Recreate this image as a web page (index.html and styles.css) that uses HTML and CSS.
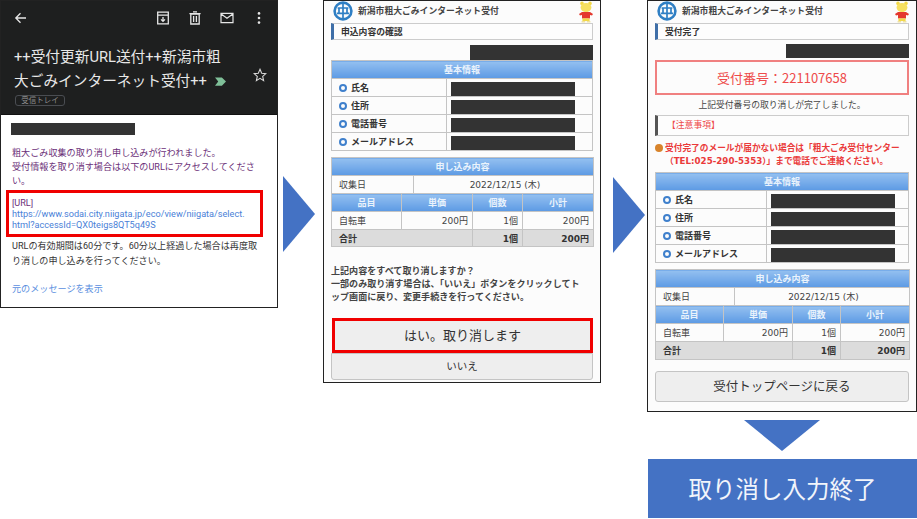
FILE: index.html
```html
<!DOCTYPE html>
<html lang="ja">
<head>
    <meta charset="UTF-8">
    <meta name="viewport" content="width=device-width, initial-scale=1.0">
    <title>取り消し入力の流れ</title>
    <link rel="stylesheet" href="styles.css">
</head>
<body>
    <div class="sheet">
        <!-- Step 1: mail -->
        <div class="phone mail">
            <div class="mail-head">
                <div class="mail-bar">
                    <svg class="icon" viewBox="0 0 14 14"><path d="M12 7H2M6.5 2.2 1.8 7l4.7 4.8" fill="none" stroke="#e6e6e6" stroke-width="1.3"/></svg>
                    <div class="mail-tools">
                        <svg class="icon" viewBox="0 0 14 14"><path d="M1.7 1.2h10.6v11.6H1.7zM1.7 4.2h10.6M7 6v4.4M5 8.4l2 2 2-2" fill="none" stroke="#e6e6e6" stroke-width="1.3"/></svg>
                        <svg class="icon" viewBox="0 0 14 14"><path d="M2.8 3h8.4v10H2.8zM1.4 2.6h11.2M5 .9h4M5.6 5v6M8.4 5v6" fill="none" stroke="#e6e6e6" stroke-width="1.3"/></svg>
                        <svg class="icon icon-mail" viewBox="0 0 14 14"><path d="M1 2.4h12v9.2H1zM1.2 3l5.8 4.2L12.8 3" fill="none" stroke="#e6e6e6" stroke-width="1.2"/></svg>
                        <svg class="icon icon-dots" viewBox="0 0 14 14"><circle cx="7" cy="2.4" r="1.3" fill="#e6e6e6"/><circle cx="7" cy="7" r="1.3" fill="#e6e6e6"/><circle cx="7" cy="11.6" r="1.3" fill="#e6e6e6"/></svg>
                    </div>
                </div>
                <div class="mail-subject">
                    <div class="mail-title">++受付更新URL送付++新潟市粗<br>大ごみインターネット受付++ <svg class="mail-mark" viewBox="0 0 12 9"><path d="M0 0h7.5L12 4.5 7.5 9H0l3.5-4.5z" fill="#7fbf98"/></svg></div>
                    <svg class="mail-star" viewBox="0 0 14 14"><path d="M7 1.3 8.7 5.2l4.2.4-3.2 2.8.9 4.2L7 10.4l-3.6 2.2.9-4.2L1.1 5.6l4.2-.4z" fill="none" stroke="#d8d8d8" stroke-width="1.1"/></svg>
                </div>
                <span class="mail-chip">受信トレイ</span>
            </div>
            <div class="mail-body">
                <div class="redact redact-sender"></div>
                <p class="mail-text purple">粗大ごみ収集の取り消し申し込みが行われました。<br>受付情報を取り消す場合は以下のURLにアクセスしてください。</p>
                <div class="mail-url">
                    <div class="purple">[URL]</div>
                    <div class="mail-link">https://www.sodai.city.niigata.jp/eco/view/niigata/select.<br>html?accessId=QX0teigs8QT5q49S</div>
                </div>
                <p class="mail-text mail-note">URLの有効期間は60分です。60分以上経過した場合は再度取り消しの申し込みを行ってください。</p>
                <div class="mail-more">元のメッセージを表示</div>
            </div>
        </div>

        <svg class="arrow" viewBox="0 0 32 76"><path d="M0 0 32 38 0 76z" fill="#4472c4"/></svg>

        <!-- Step 2: confirm -->
        <div class="phone site site-confirm">
            <div class="site-head">
                <svg class="logo" viewBox="0 0 20 20"><circle cx="10" cy="10" r="8.4" fill="none" stroke="#2f7fc4" stroke-width="2.6"/><path d="M10 3v14M4.6 7h10.8M4 12.4h12M6 7v5.4M14 7v5.4" fill="none" stroke="#2f7fc4" stroke-width="1.7"/></svg>
                <span class="site-name">新潟市粗大ごみインターネット受付</span>
                <svg class="mascot" viewBox="0 0 16 22"><circle cx="4" cy="2.4" r="1.8" fill="#f2d848"/><circle cx="12" cy="2.4" r="1.8" fill="#f2d848"/><ellipse cx="8" cy="6.6" rx="5.4" ry="4.6" fill="#f6e060"/><path d="M4 11h8l3 2-1 1.6-2-.6v3.4H4V14l-2 .6L1 13z" fill="#e4382e"/><path d="M4.4 17.4h7.2V20H4.4z" fill="#f2d848"/><path d="M3.6 20h3.6v1.6H3.6zM8.8 20h3.6v1.6H8.8z" fill="#eee0a0"/></svg>
            </div>
            <div class="section">申込内容の確認</div>
            <div class="redact redact-id"></div>
            <table class="grid info">
                <colgroup><col class="col-label"><col></colgroup>
                <tr><th colspan="2">基本情報</th></tr>
                <tr><td class="label"><i class="dot"></i>氏名</td><td class="masked"><div class="redact redact-value"></div></td></tr>
                <tr><td class="label"><i class="dot"></i>住所</td><td class="masked"><div class="redact redact-value"></div></td></tr>
                <tr><td class="label"><i class="dot"></i>電話番号</td><td class="masked"><div class="redact redact-value"></div></td></tr>
                <tr><td class="label"><i class="dot"></i>メールアドレス</td><td class="masked"><div class="redact redact-value"></div></td></tr>
            </table>
            <table class="grid order">
                <colgroup><col class="col-a"><col class="col-b"><col class="col-c"><col class="col-d"><col class="col-e"></colgroup>
                <tr><th colspan="5">申し込み内容</th></tr>
                <tr><td colspan="2">収集日</td><td colspan="3" class="center">2022/12/15 (木)</td></tr>
                <tr><th colspan="1">品目</th><th colspan="2">単価</th><th>個数</th><th>小計</th></tr>
                <tr><td>自転車</td><td colspan="2" class="right">200円</td><td class="right">1個</td><td class="right">200円</td></tr>
                <tr class="total"><td colspan="3">合計</td><td class="right">1個</td><td class="right">200円</td></tr>
            </table>
            <p class="confirm-text">上記内容をすべて取り消しますか？<br>一部のみ取り消す場合は、「いいえ」ボタンをクリックしてト<br>ップ画面に戻り、変更手続きを行ってください。</p>
            <div class="btn btn-yes">はい。取り消します</div>
            <div class="btn btn-no">いいえ</div>
        </div>

        <svg class="arrow arrow-second" viewBox="0 0 32 76"><path d="M0 0 32 38 0 76z" fill="#4472c4"/></svg>

        <!-- Step 3: done -->
        <div class="last-col">
            <div class="phone site site-done">
                <div class="site-head">
                    <svg class="logo" viewBox="0 0 20 20"><circle cx="10" cy="10" r="8.4" fill="none" stroke="#2f7fc4" stroke-width="2.6"/><path d="M10 3v14M4.6 7h10.8M4 12.4h12M6 7v5.4M14 7v5.4" fill="none" stroke="#2f7fc4" stroke-width="1.7"/></svg>
                    <span class="site-name">新潟市粗大ごみインターネット受付</span>
                    <svg class="mascot" viewBox="0 0 16 22"><circle cx="4" cy="2.4" r="1.8" fill="#f2d848"/><circle cx="12" cy="2.4" r="1.8" fill="#f2d848"/><ellipse cx="8" cy="6.6" rx="5.4" ry="4.6" fill="#f6e060"/><path d="M4 11h8l3 2-1 1.6-2-.6v3.4H4V14l-2 .6L1 13z" fill="#e4382e"/><path d="M4.4 17.4h7.2V20H4.4z" fill="#f2d848"/><path d="M3.6 20h3.6v1.6H3.6zM8.8 20h3.6v1.6H8.8z" fill="#eee0a0"/></svg>
                </div>
                <div class="section">受付完了</div>
                <div class="redact redact-id redact-id-done"></div>
                <div class="receipt">受付番号：221107658</div>
                <div class="done-text">上記受付番号の取り消しが完了しました。</div>
                <div class="section section-note">【注意事項】</div>
                <div class="warning"><i class="warn-dot"></i>受付完了のメールが届かない場合は「粗大ごみ受付センター（TEL:025-290-5353）」まで電話でご連絡ください。</div>
                <table class="grid info">
                    <colgroup><col class="col-label-done"><col></colgroup>
                    <tr><th colspan="2">基本情報</th></tr>
                    <tr><td class="label"><i class="dot"></i>氏名</td><td class="masked"><div class="redact redact-value"></div></td></tr>
                    <tr><td class="label"><i class="dot"></i>住所</td><td class="masked"><div class="redact redact-value"></div></td></tr>
                    <tr><td class="label"><i class="dot"></i>電話番号</td><td class="masked"><div class="redact redact-value"></div></td></tr>
                    <tr><td class="label"><i class="dot"></i>メールアドレス</td><td class="masked"><div class="redact redact-value"></div></td></tr>
                </table>
                <table class="grid order">
                    <colgroup><col class="col-a2"><col class="col-b2"><col class="col-c2"><col class="col-d2"><col class="col-e2"></colgroup>
                    <tr><th colspan="5">申し込み内容</th></tr>
                    <tr><td colspan="2">収集日</td><td colspan="3" class="center">2022/12/15 (木)</td></tr>
                    <tr><th colspan="1">品目</th><th colspan="2">単価</th><th>個数</th><th>小計</th></tr>
                    <tr><td>自転車</td><td colspan="2" class="right">200円</td><td class="right">1個</td><td class="right">200円</td></tr>
                    <tr class="total"><td colspan="3">合計</td><td class="right">1個</td><td class="right">200円</td></tr>
                </table>
                <div class="btn btn-top">受付トップページに戻る</div>
            </div>
            <svg class="arrow-down" viewBox="0 0 76 31"><path d="M0 0h76L38 31z" fill="#4472c4"/></svg>
            <div class="finish">取り消し入力終了</div>
        </div>
    </div>
</body>
</html>
```

FILE: styles.css
```css
* {
    box-sizing: border-box;
}
body {
    margin: 0;
    background: white;
    font-family: "DejaVu Sans", "Noto Sans CJK JP", sans-serif;
    color: #333;
}
.sheet {
    display: flex;
    align-items: flex-start;
    width: 917px;
    height: 519px;
    overflow: hidden;
}
.phone {
    border: 1px solid #222;
    background: white;
}
.redact {
    background: #333;
}
.arrow {
    width: 32px;
    height: 76px;
    margin: 176px 0 0 5px;
    flex: none;
}
.arrow-second {
    margin: 177px 0 0 12px;
}

/* mail */
.mail {
    width: 278px;
    height: 308px;
    flex: none;
    font-family: Roboto, "Noto Sans CJK JP", sans-serif;
}
.mail-head {
    height: 114px;
    padding: 9px 10px 0 13px;
    background: #1e1f1f;
    border-bottom: 1px solid #111;
}
.mail-bar {
    display: flex;
    justify-content: space-between;
    align-items: center;
    height: 16px;
}
.mail-tools {
    display: flex;
    gap: 18px;
    padding-right: 1px;
}
.icon {
    width: 14px;
    height: 14px;
    display: block;
}
.mail-subject {
    display: flex;
    justify-content: space-between;
    margin-top: 19px;
}
.mail-title {
    font-size: 14.7px;
    line-height: 24px;
    color: #e8e8e8;
    white-space: nowrap;
}
.mail-mark {
    width: 11px;
    height: 9px;
    margin-left: 4px;
}
.mail-star {
    width: 14px;
    height: 14px;
    margin: 23px 0 0 0;
}
.mail-chip {
    display: block;
    width: 50px;
    margin: 2px 0 0 1px;
    height: 11px;
    line-height: 9px;
    font-size: 7.5px;
    text-align: center;
    color: #8d8d8d;
    border: 1px solid #4a4d52;
    border-radius: 3px;
}
.mail-body {
    padding: 8px 10px 0;
    font-size: 9.1px;
    line-height: 14px;
}
.redact-sender {
    width: 124px;
    height: 12px;
}
.mail-text {
    margin: 11px 0 0 1px;
    color: #333;
}
.purple {
    color: #6b2f78;
}
.mail-url {
    width: 257px;
    height: 47px;
    margin: 2px 0 0 -5px;
    padding: 5px 0 0 3px;
    border: 3px solid #f00000;
    line-height: 11px;
}
.mail-link {
    color: #4a7fd8;
    font-size: 9.15px;
}
.mail-note {
    margin: 2px 6px 0 1px;
    line-height: 15px;
}
.mail-more {
    margin: 13px 0 0 1px;
    color: #5b8fe0;
}

/* site pages */
.site {
    padding: 0 7px;
    background: #fcfcfc;
}
.site-confirm {
    width: 278px;
    height: 383px;
    flex: none;
    margin-left: 8px;
}
.last-col {
    width: 270px;
    margin-left: 2px;
    flex: none;
}
.site-done {
    height: 412px;
}
.site-head {
    display: flex;
    align-items: center;
    height: 22px;
    padding-left: 2px;
}
.logo {
    width: 20px;
    height: 20px;
    margin-top: -3px;
}
.site-name {
    margin: -3px 0 0 5px;
    font-size: 8.8px;
    font-weight: bold;
    color: #444;
}
.mascot {
    width: 16px;
    height: 22px;
    margin-left: auto;
    margin-right: -1px;
}
.section {
    height: 17px;
    padding-left: 7px;
    line-height: 16px;
    font-size: 8.8px;
    font-weight: bold;
    color: #333;
    background: #fdfdfd;
    border: 1px solid #ccc;
    border-left: 3px solid #3f6fa8;
}
.redact-id {
    width: 123px;
    height: 15px;
    margin: 5px 0 0 auto;
}
.redact-id-done {
    margin-top: 4px;
    height: 14px;
}
.grid {
    width: 100%;
    table-layout: fixed;
    border-collapse: collapse;
    border: 1px solid #b4b4b4;
    font-size: 9px;
    color: #444;
}
.grid th,
.grid td {
    height: 18px;
    padding: 0 4px 0 7px;
    border: 1px solid #c4c4c4;
    overflow: hidden;
    white-space: nowrap;
}
.grid th {
    padding: 0;
    color: #eaf3fc;
    font-weight: bold;
    text-align: center;
    background: linear-gradient(#94c0f0, #5c9ae4);
}
.order {
    margin-top: 6px;
}
.center {
    text-align: center;
}
.grid .right {
    text-align: right;
}
.grid .label {
    padding-left: 7px;
    font-weight: bold;
    color: #333;
}
.dot {
    display: inline-block;
    width: 8px;
    height: 8px;
    margin-right: 4px;
    border: 2px solid #3f80cc;
    border-radius: 50%;
    vertical-align: -1px;
}
.grid .masked {
    padding: 0 0 0 4px;
    vertical-align: bottom;
}
.redact-value {
    width: 124px;
    height: 14px;
}
.grid .total td {
    height: 17px;
    background: #dcdcdc;
    font-weight: bold;
    color: #333;
}
.site-done .grid .total td {
    height: 18px;
}
.col-label {
    width: 115px;
}
.col-a {
    width: 70px;
}
.col-b {
    width: 12px;
}
.col-c {
    width: 59px;
}
.col-d {
    width: 50px;
}
.col-e {
    width: 71px;
}
.col-label-done {
    width: 111px;
}
.col-a2 {
    width: 68px;
}
.col-b2 {
    width: 11px;
}
.col-c2 {
    width: 58px;
}
.col-d2 {
    width: 48px;
}
.col-e2 {
    width: 69px;
}
.confirm-text {
    margin: 18px 0 0;
    font-size: 9.05px;
    line-height: 13px;
    font-weight: bold;
    color: #444;
    white-space: nowrap;
}
.btn {
    border: 1px solid #c4c4c4;
    background: #eee;
    text-align: center;
    color: #333;
}
.btn-yes {
    height: 35px;
    margin: 14px 0 0 1px;
    line-height: 29px;
    font-size: 13px;
    border: 3px solid #f00000;
}
.btn-no {
    height: 27px;
    line-height: 25px;
    font-size: 10.5px;
    border-radius: 0 0 3px 3px;
}
.btn-top {
    height: 31px;
    margin-top: 11px;
    line-height: 29px;
    font-size: 12.5px;
    border-radius: 3px;
}
.receipt {
    height: 35px;
    margin-top: 2px;
    line-height: 31px;
    text-align: center;
    font-family: "Noto Sans CJK JP", sans-serif;
    font-size: 13px;
    color: #ee4a4a;
    border: 2px solid #f08080;
}
.done-text {
    margin-top: 2px;
    height: 17px;
    line-height: 17px;
    text-align: center;
    font-size: 8.8px;
    color: #444;
}
.section-note {
    height: 21px;
    margin-top: 1px;
    padding-left: 9px;
    line-height: 19px;
    font-weight: normal;
    color: #ee4a4a;
    border-left-color: #555;
}
.warning {
    margin: 6px 0 4px;
    padding-left: 10px;
    font-size: 8.7px;
    line-height: 13px;
    font-weight: bold;
    color: #ea3a3a;
    position: relative;
}
.warn-dot {
    position: absolute;
    left: 0;
    top: 2px;
    width: 8px;
    height: 8px;
    border-radius: 50%;
    background: #d8842c;
}
.arrow-down {
    display: block;
    width: 76px;
    height: 31px;
    margin: 8px 0 0 97px;
}
.finish {
    height: 59px;
    margin: 8px 0 0 1px;
    line-height: 59px;
    text-align: center;
    font-family: "Noto Sans CJK JP", sans-serif;
    font-size: 23.5px;
    color: #f2f5fb;
    background: #4472c4;
}
```
